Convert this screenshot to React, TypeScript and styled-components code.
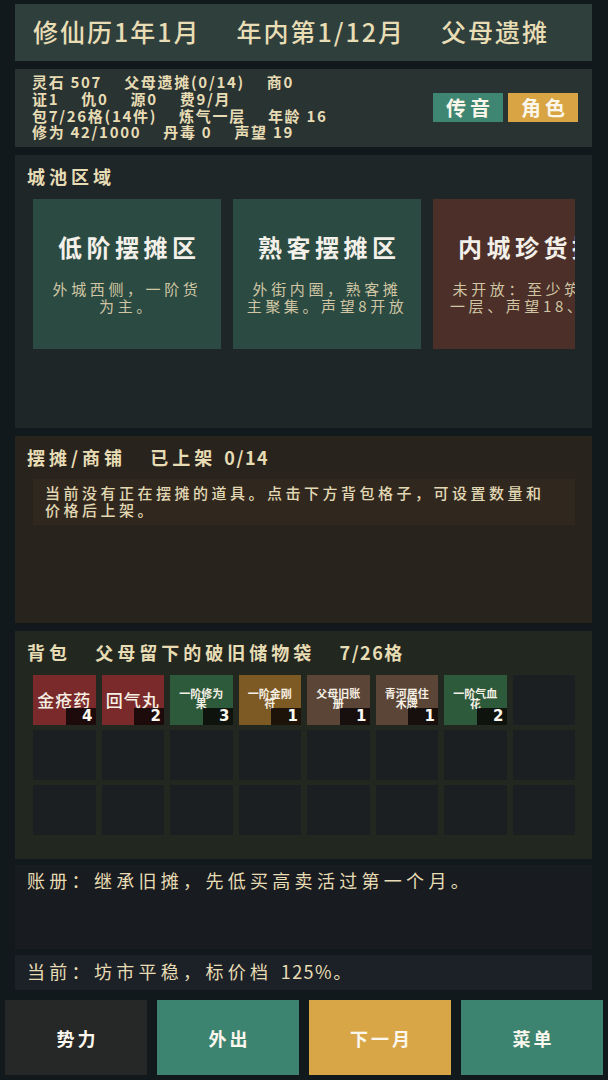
import React from "react";
import styled, { createGlobalStyle } from "styled-components";

const GlobalStyle = createGlobalStyle`
  html, body { margin: 0; padding: 0; background: #12191c; }
  body { font-family: "Noto Sans CJK SC", "Noto Sans", sans-serif; color: #e7dcb4; }
  * { box-sizing: border-box; }
`;

const Page = styled.div`
  width: 608px;
  height: 1080px;
  display: flex;
  flex-direction: column;
  padding-top: 4px;
  overflow: hidden;
`;

const Main = styled.div<{ $gap?: number; $mt?: number }>`
  display: flex;
  flex-direction: column;
  gap: ${(p) => p.$gap ?? 8}px;
  margin-top: ${(p) => p.$mt ?? 0}px;
  padding: 0 16px 0 15px;
`;

const Header = styled.div`
  height: 57px;
  background: #2f3f3c;
  display: flex;
  align-items: center;
  gap: 36px;
  padding: 0 0 3px 18px;
  font-size: 25px;
  font-weight: 500;
  letter-spacing: 2px;
  color: #e8ddb5;
  white-space: nowrap;
`;

const StatsPanel = styled.div`
  height: 78px;
  background: #293332;
  display: flex;
  align-items: center;
  justify-content: space-between;
  padding: 0 14px 1px 17px;
`;

const StatLines = styled.div`
  display: flex;
  flex-direction: column;
  font-size: 15px;
  font-weight: 700;
  line-height: 16.6px;
  letter-spacing: 1.7px;
`;

const StatLine = styled.div`
  display: flex;
  gap: 22px;
  white-space: nowrap;
`;

const TagRow = styled.div`
  display: flex;
  gap: 5px;
`;

const Tag = styled.div<{ $bg: string }>`
  width: 70px;
  height: 29px;
  background: ${(p) => p.$bg};
  color: #fbf6ea;
  font-size: 20px;
  font-weight: 700;
  letter-spacing: 4px;
  padding-left: 4px;
  display: flex;
  align-items: center;
  justify-content: center;
`;

const Panel = styled.div<{ $bg: string; $h: number }>`
  height: ${(p) => p.$h}px;
  background: ${(p) => p.$bg};
  padding: 10px 17px 0 12px;
  display: flex;
  flex-direction: column;
`;

const SectionTitle = styled.div`
  font-size: 18px;
  font-weight: 700;
  line-height: 22px;
  letter-spacing: 4px;
  white-space: pre;
  color: #e7dcb4;
`;

const Num = styled.span`
  letter-spacing: 1.5px;
`;

const CardStrip = styled.div`
  margin: 12px 0 0 6px;
  display: flex;
  gap: 12px;
  overflow: hidden;
`;

const Card = styled.div<{ $locked?: boolean }>`
  flex: 0 0 188px;
  height: 150px;
  background: ${(p) => (p.$locked ? "#4b2f28" : "#2b4a42")};
  display: flex;
  flex-direction: column;
  align-items: center;
  padding: 32px 12px 0;
`;

const CardTitle = styled.div`
  font-size: 24px;
  font-weight: 700;
  line-height: 32px;
  letter-spacing: 4.5px;
  margin-right: -4.5px;
  color: #f2f0e8;
  white-space: nowrap;
`;

const CardDesc = styled.div`
  margin-top: 17px;
  width: 164px;
  font-size: 15px;
  line-height: 17px;
  letter-spacing: 3.6px;
  text-align: center;
  color: #d0c6a4;
`;

const Notice = styled.div`
  margin: 11px 0 0 6px;
  height: 46px;
  background: #30281f;
  padding: 5px 20px 6px 12px;
  font-size: 15px;
  font-weight: 500;
  line-height: 17px;
  letter-spacing: 3.5px;
  color: #e2d8b4;
`;

const Grid = styled.div`
  margin: 12px 0 0 6px;
  display: grid;
  grid-template-columns: repeat(8, 1fr);
  grid-auto-rows: 50px;
  gap: 5px 6px;
`;

const Cell = styled.div<{ $bg?: string }>`
  position: relative;
  background: ${(p) => p.$bg ?? "#1b1f22"};
  display: flex;
  align-items: center;
  justify-content: center;
  padding: 0 4px;
  text-align: center;
  color: #f6f0e4;
`;

const ItemName = styled.div<{ $small?: boolean }>`
  font-size: ${(p) => (p.$small ? 11 : 17)}px;
  font-weight: ${(p) => (p.$small ? 700 : 500)};
  line-height: ${(p) => (p.$small ? 10 : 20)}px;
  letter-spacing: ${(p) => (p.$small ? 0 : 1)}px;
  margin-top: ${(p) => (p.$small ? -4 : -1)}px;
  word-break: break-all;
`;

const Count = styled.div`
  position: absolute;
  right: 0;
  bottom: 0;
  width: 30px;
  height: 17px;
  background: rgba(8, 4, 4, 0.82);
  font-family: "DejaVu Sans", sans-serif;
  font-weight: 700;
  font-size: 15px;
  line-height: 17px;
  text-align: right;
  padding-right: 3px;
  color: #fbf8f0;
`;

const TextBar = styled.div<{ $bg: string; $h: number; $pt: number }>`
  height: ${(p) => p.$h}px;
  background: ${(p) => p.$bg};
  padding: ${(p) => p.$pt}px 12px 0;
  font-size: 18px;
  line-height: 22px;
  letter-spacing: 4.3px;
  color: #e7dcb4;
  white-space: nowrap;
`;

const ButtonBar = styled.div`
  margin-top: 10px;
  padding: 0 5px;
  display: grid;
  grid-template-columns: repeat(4, 142px);
  gap: 10px;
`;

const ActionButton = styled.div<{ $bg: string }>`
  height: 75px;
  background: ${(p) => p.$bg};
  color: #fbf7ee;
  font-size: 18px;
  font-weight: 700;
  letter-spacing: 3px;
  padding-left: 3px;
  display: flex;
  align-items: center;
  justify-content: center;
`;

const items = [
  { name: "金疮药", n: 4, bg: "#7a2a2a" },
  { name: "回气丸", n: 2, bg: "#7a2a2a" },
  { name: "一阶修为果", n: 3, bg: "#2e5a3c" },
  { name: "一阶金刚符", n: 1, bg: "#7d5a24" },
  { name: "父母旧账册", n: 1, bg: "#5b4537" },
  { name: "青河居住木牌", n: 1, bg: "#5b4537" },
  { name: "一阶气血花", n: 2, bg: "#2e5a3c" },
];

const stats = [
  ["灵石 507", "父母遗摊(0/14)", "商0"],
  ["证1", "仇0", "源0", "费9/月"],
  ["包7/26格(14件)", "炼气一层", "年龄 16"],
  ["修为 42/1000", "丹毒 0", "声望 19"],
];

const areas = [
  { title: "低阶摆摊区", desc: "外城西侧，一阶货为主。" },
  { title: "熟客摆摊区", desc: "外街内圈，熟客摊主聚集。声望8开放" },
  { title: "内城珍货摊", desc: "未开放：至少筑基一层、声望18、可", locked: true },
];

export default function App() {
  return (
    <>
      <GlobalStyle />
      <Page>
        <Main>
          <Header>
            <span>修仙历1年1月</span>
            <span>年内第1/12月</span>
            <span>父母遗摊</span>
          </Header>
          <StatsPanel>
            <StatLines>
              {stats.map((line, i) => (
                <StatLine key={i}>
                  {line.map((s) => (
                    <span key={s}>{s}</span>
                  ))}
                </StatLine>
              ))}
            </StatLines>
            <TagRow>
              <Tag $bg="#3e8672">传音</Tag>
              <Tag $bg="#d9a544">角色</Tag>
            </TagRow>
          </StatsPanel>
          <Panel $bg="#1e2628" $h={273}>
            <SectionTitle>城池区域</SectionTitle>
            <CardStrip>
              {areas.map((a) => (
                <Card key={a.title} $locked={a.locked}>
                  <CardTitle>{a.title}</CardTitle>
                  <CardDesc>{a.desc}</CardDesc>
                </Card>
              ))}
            </CardStrip>
          </Panel>
          <Panel $bg="#28231d" $h={187}>
            <SectionTitle>
              {"摆摊/商铺   已上架 "}
              <Num>0/14</Num>
            </SectionTitle>
            <Notice>当前没有正在摆摊的道具。点击下方背包格子，可设置数量和价格后上架。</Notice>
          </Panel>
          <Panel $bg="#222720" $h={228}>
            <SectionTitle>
              {"背包   父母留下的破旧储物袋   "}
              <Num>7/26</Num>格
            </SectionTitle>
            <Grid>
              {Array.from({ length: 24 }).map((_, i) => {
                const it = items[i];
                if (!it) return <Cell key={i} />;
                return (
                  <Cell key={i} $bg={it.bg}>
                    <ItemName $small={it.name.length > 3}>{it.name}</ItemName>
                    <Count>{it.n}</Count>
                  </Cell>
                );
              })}
            </Grid>
          </Panel>
        </Main>
        <Main $gap={6} $mt={6}>
          <TextBar $bg="#181b1f" $h={84} $pt={4}>
            账册：继承旧摊，先低买高卖活过第一个月。
          </TextBar>
          <TextBar $bg="#1c2127" $h={35} $pt={5}>
            当前：坊市平稳，标价档 <Num>125%</Num>。
          </TextBar>
        </Main>
        <ButtonBar>
          <ActionButton $bg="#262828">势力</ActionButton>
          <ActionButton $bg="#3d8470">外出</ActionButton>
          <ActionButton $bg="#d8a646">下一月</ActionButton>
          <ActionButton $bg="#3d8470">菜单</ActionButton>
        </ButtonBar>
      </Page>
    </>
  );
}
